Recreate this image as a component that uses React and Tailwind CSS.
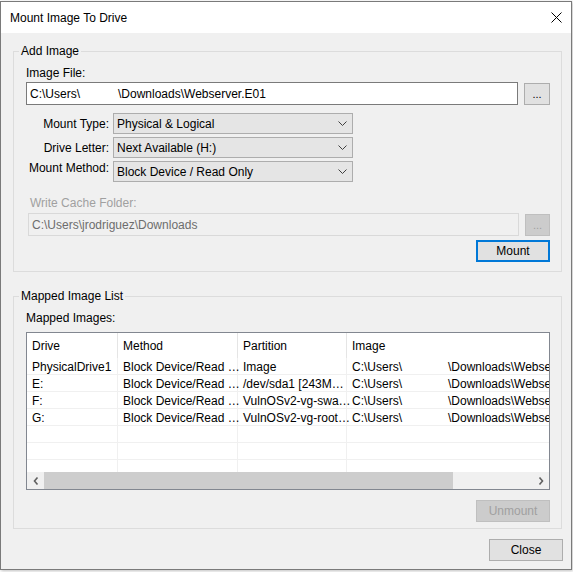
import React from 'react';

const rows = [
    ['PhysicalDrive1', 'Block Device/Read …', 'Image', true],
    ['E:', 'Block Device/Read …', '/dev/sda1 [243M…', true],
    ['F:', 'Block Device/Read …', 'VulnOSv2-vg-swa…', true],
    ['G:', 'Block Device/Read …', 'VulnOSv2-vg-root…', true],
    ['', '', '', false],
    ['', '', '', false],
    ['', '', '', false],
];

const Chevron = () => (
    <svg width="9" height="5" viewBox="0 0 9 5" className="shrink-0">
        <polyline points="0.5,0.5 4.5,4.5 8.5,0.5" fill="none" stroke="#404040" strokeWidth="1" />
    </svg>
);

const Select = ({ value }) => (
    <div className="w-[240px] h-[21px] bg-[#e5e5e5] border border-[#adadad] flex items-center justify-between pl-[3px] pr-[5px]">
        <span>{value}</span>
        <Chevron />
    </div>
);

const Button = ({ children, className = '' }) => (
    <div className={`h-[22px] flex items-center justify-center ${className}`}>{children}</div>
);

const App = () => {
    return (
        <div className="w-[573px] h-[572px] bg-white pt-[1px] font-['Liberation_Sans',Arial,sans-serif] text-[12px] leading-[16px] text-black">
            <div className="w-[572px] h-[569px] border border-[#7a7a7a] bg-[#f0f0f0] flex flex-col shadow-[1px_1px_3px_rgba(0,0,0,0.25)]">
                {/* Title bar */}
                <div className="h-[31px] bg-white flex items-center justify-between pl-[9px] pr-[9px]">
                    <span>Mount Image To Drive</span>
                    <svg width="11" height="11" viewBox="0 0 11 11">
                        <path d="M0.5 0.5 L10.5 10.5 M10.5 0.5 L0.5 10.5" stroke="#000" strokeWidth="1" fill="none" />
                    </svg>
                </div>

                <div className="pl-[12px] flex flex-col">
                    {/* Add Image */}
                    <fieldset className="mt-[10px] w-[549px] border border-[#dcdcdc]">
                        <legend className="ml-[5px] px-[2px]">Add Image</legend>
                        <div className="pl-[12px] pr-[11px] pt-[6px] pb-[9px] flex flex-col">
                            <span>Image File:</span>
                            <div className="mt-[1px] flex items-center gap-[6px]">
                                <div className="w-[492px] h-[23px] bg-white border border-[#7a7a7a] flex items-center pl-[3px] whitespace-nowrap">
                                    <span className="inline-block w-[88px]">C:\Users\</span>
                                    <span>\Downloads\Webserver.E01</span>
                                </div>
                                <Button className="w-[26px] h-[21px] bg-[#e1e1e1] border border-[#adadad] text-[11px]">...</Button>
                            </div>

                            <div className="mt-[8px] flex flex-col gap-[3px]">
                                <div className="flex items-center gap-[4px]">
                                    <span className="w-[83px] text-right whitespace-nowrap">Mount Type:</span>
                                    <Select value="Physical & Logical" />
                                </div>
                                <div className="flex items-center gap-[4px]">
                                    <span className="w-[83px] text-right whitespace-nowrap">Drive Letter:</span>
                                    <Select value="Next Available (H:)" />
                                </div>
                                <div className="flex items-start gap-[4px]">
                                    <span className="w-[83px] -mt-[1px] text-right whitespace-nowrap">Mount Method:</span>
                                    <Select value="Block Device / Read Only" />
                                </div>
                            </div>

                            <span className="mt-[13px] pl-[4px] text-[#a0a0a0]">Write Cache Folder:</span>
                            <div className="mt-[2px] flex items-center gap-[6px]">
                                <div className="ml-[2px] w-[491px] h-[23px] border border-[#d9d9d9] flex items-center pl-[3px] text-[#6d6d6d]">
                                    C:\Users\jrodriguez\Downloads
                                </div>
                                <Button className="w-[25px] bg-[#cccccc] border border-[#bfbfbf] text-[#a0a0a0] text-[11px]">...</Button>
                            </div>

                            <div className="mt-[4px] flex justify-end">
                                <Button className="w-[74px] bg-[#e1e1e1] border-2 border-[#0078d7]">Mount</Button>
                            </div>
                        </div>
                    </fieldset>

                    {/* Mapped Image List */}
                    <fieldset className="mt-[16px] w-[549px] border border-[#dcdcdc]">
                        <legend className="ml-[5px] px-[2px]">Mapped Image List</legend>
                        <div className="pl-[12px] pr-[11px] pt-[6px] pb-[6px] flex flex-col">
                            <span>Mapped Images:</span>
                            <div className="mt-[6px] w-[524px] h-[158px] bg-white border border-[#828790] flex flex-col overflow-hidden">
                                <div className="h-[25px] shrink-0 grid grid-cols-[91px_120px_109px_300px] whitespace-nowrap">
                                    {['Drive', 'Method', 'Partition', 'Image'].map((h, i) => (
                                        <div key={h} className={`flex items-center pl-[5px] ${i < 3 ? 'border-r border-[#e5e5e5]' : ''}`}>{h}</div>
                                    ))}
                                </div>
                                <div className="h-[114px] shrink-0 overflow-hidden">
                                    {rows.map((r, idx) => (
                                        <div key={idx} className="h-[17px] grid grid-cols-[91px_120px_109px_300px] border-b border-[#f0f0f0] whitespace-nowrap leading-[18px]">
                                            <div className="pl-[5px] border-r border-[#f0f0f0]">{r[0]}</div>
                                            <div className="pl-[5px] border-r border-[#f0f0f0]">{r[1]}</div>
                                            <div className="pl-[5px] border-r border-[#f0f0f0]">{r[2]}</div>
                                            <div className="pl-[5px]">
                                                {r[3] && (
                                                    <>
                                                        <span className="inline-block w-[96px]">C:\Users\</span>
                                                        <span>\Downloads\Webserver.E01</span>
                                                    </>
                                                )}
                                            </div>
                                        </div>
                                    ))}
                                </div>
                                {/* Horizontal scrollbar */}
                                <div className="h-[17px] shrink-0 bg-[#f0f0f0] flex items-center">
                                    <div className="w-[17px] h-[17px] flex items-center justify-center">
                                        <svg width="6" height="8" viewBox="0 0 6 8">
                                            <polyline points="4.5,0.5 1.5,4 4.5,7.5" fill="none" stroke="#606060" strokeWidth="1.6" />
                                        </svg>
                                    </div>
                                    <div className="w-[409px] h-[17px] bg-[#cdcdcd]" />
                                    <div className="flex-1" />
                                    <div className="w-[17px] h-[17px] flex items-center justify-center">
                                        <svg width="6" height="8" viewBox="0 0 6 8">
                                            <polyline points="1.5,0.5 4.5,4 1.5,7.5" fill="none" stroke="#606060" strokeWidth="1.6" />
                                        </svg>
                                    </div>
                                </div>
                            </div>
                            <div className="mt-[10px] flex justify-end">
                                <Button className="w-[74px] bg-[#cccccc] border border-[#bfbfbf] text-[#a0a0a0]">Unmount</Button>
                            </div>
                        </div>
                    </fieldset>

                    <div className="mt-[10px] w-[550px] flex justify-end">
                        <Button className="w-[74px] bg-[#e1e1e1] border border-[#adadad]">Close</Button>
                    </div>
                </div>
            </div>
        </div>
    );
};

export default App;
